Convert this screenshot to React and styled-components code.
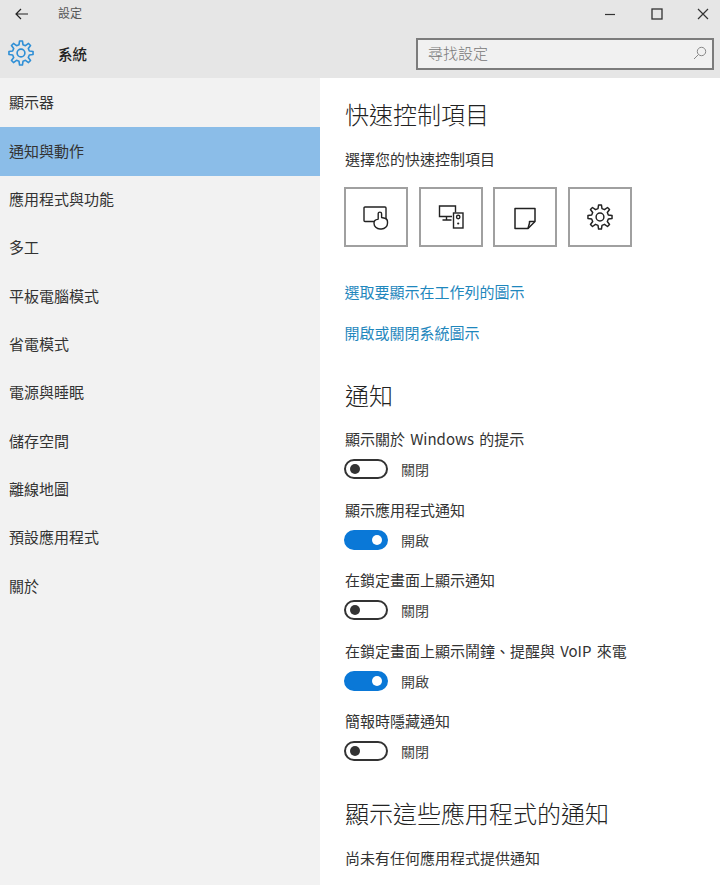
import styled, { createGlobalStyle } from "styled-components";

const Global = createGlobalStyle`
  html, body {
    margin: 0;
    padding: 0;
    background: #fff;
  }
  body {
    font-family: "Noto Sans CJK TC", "Noto Sans", sans-serif;
    font-weight: 300;
    color: #333;
  }
`;

const Page = styled.div`
  width: 720px;
  height: 885px;
  overflow: hidden;
  display: flex;
  flex-direction: column;
`;

const Header = styled.header`
  height: 78px;
  flex: none;
  background: #e6e6e6;
  display: flex;
  flex-direction: column;
`;

const TitleBar = styled.div`
  height: 28px;
  display: flex;
  align-items: center;
`;

const BackButton = styled.div`
  width: 58px;
  padding-left: 15px;
  box-sizing: border-box;
  display: flex;
  align-items: center;
`;

const WindowTitle = styled.div`
  font-size: 12px;
  line-height: 24px;
  padding-bottom: 2px;
  font-weight: 400;
  color: #555;
  flex: 1;
`;

const WindowControls = styled.div`
  display: flex;
  align-items: center;
  gap: 34.5px;
  padding-right: 11px;
`;

const SystemBar = styled.div`
  flex: 1;
  display: flex;
  align-items: center;
  padding: 0 6px 0 8px;
`;

const SystemName = styled.div`
  margin-left: 24px;
  font-size: 14.5px;
  font-weight: 500;
  color: #222;
  flex: 1;
`;

const Search = styled.div`
  width: 298px;
  height: 32px;
  box-sizing: border-box;
  border: 2px solid #7c7c7c;
  background: #f1f1f1;
  display: flex;
  align-items: center;
  justify-content: space-between;
  padding: 0 5px 3px 10px;
  margin-top: 2px;
  font-size: 15px;
  color: #777;
`;

const Body = styled.div`
  flex: 1;
  display: flex;
`;

const Sidebar = styled.nav`
  width: 320px;
  flex: none;
  background: #f2f2f2;
  padding-top: 1px;
`;

const NavItem = styled.div`
  height: 48.35px;
  box-sizing: border-box;
  display: flex;
  align-items: center;
  padding: 0 0 3px 9px;
  font-size: 15px;
  font-weight: 400;
  color: #333;
  background: ${(p) => (p.$active ? "#8bbde8" : "transparent")};
`;

const Content = styled.main`
  flex: 1;
  padding-left: 25px;
  display: flex;
  flex-direction: column;
`;

const Heading = styled.h2`
  margin: ${(p) => p.$top}px 0 0;
  font-size: 24px;
  line-height: 34px;
  font-weight: 300;
  color: #222;
`;

const Label = styled.div`
  margin-top: ${(p) => p.$top ?? 0}px;
  font-size: 15px;
  line-height: 22px;
  font-weight: 400;
  word-spacing: 1.8px;
  color: #333;
`;

const Tiles = styled.div`
  display: flex;
  gap: 10.5px;
  margin-top: 17px;
  margin-left: -1px;
`;

const Tile = styled.div`
  width: 64px;
  height: 60px;
  box-sizing: border-box;
  border: 2px solid #a0a0a0;
  display: flex;
  align-items: center;
  justify-content: center;
`;

const TextLink = styled.a`
  display: block;
  margin-top: ${(p) => p.$top}px;
  margin-left: -0.5px;
  font-size: 15px;
  line-height: 22px;
  font-weight: 400;
  color: #1f87bd;
`;

const SettingRow = styled.div`
  margin-top: ${(p) => p.$top}px;
  display: flex;
  flex-direction: column;
`;

const ToggleRow = styled.div`
  display: flex;
  align-items: center;
  gap: 13px;
  margin-top: 9px;
  margin-left: -1px;
  height: 20px;
`;

const Track = styled.div`
  width: 44px;
  height: 20px;
  box-sizing: border-box;
  border-radius: 10px;
  border: 2px solid ${(p) => (p.$on ? "#0a78d7" : "#333")};
  background: ${(p) => (p.$on ? "#0a78d7" : "transparent")};
  display: flex;
  align-items: center;
  justify-content: ${(p) => (p.$on ? "flex-end" : "flex-start")};
  padding: 0 4px;
`;

const Knob = styled.div`
  width: 10px;
  height: 10px;
  border-radius: 50%;
  background: ${(p) => (p.$on ? "#fff" : "#333")};
`;

const ToggleText = styled.span`
  font-size: 14px;
  font-weight: 400;
  color: #444;
`;

// eight toothed gear outline, used in the header and in the quick action tile
function gearPath(cx, cy, outer, inner) {
  const teeth = 8;
  const step = (Math.PI * 2) / teeth;
  const pts = [];
  for (let i = 0; i < teeth; i++) {
    const a = i * step - Math.PI / 2;
    const at = (r, d) => [cx + r * Math.cos(a + d), cy + r * Math.sin(a + d)];
    pts.push(at(inner, -step * 0.3), at(outer, -step * 0.15), at(outer, step * 0.15), at(inner, step * 0.3));
  }
  return "M" + pts.map((p) => p[0].toFixed(2) + " " + p[1].toFixed(2)).join("L") + "Z";
}

function Gear({ size, color, width }) {
  return (
    <svg width={size} height={size} viewBox="0 0 24 24" fill="none" stroke={color} strokeWidth={width} strokeLinejoin="round">
      <path d={gearPath(12, 12, 11.2, 7.9)} />
      <circle cx="12" cy="12" r="3.6" />
    </svg>
  );
}

function BackIcon() {
  return (
    <svg width="14" height="12" viewBox="0 0 14 12" fill="none" stroke="#222" strokeWidth="1.2">
      <path d="M13 6H1.2M6 1L1 6l5 5" />
    </svg>
  );
}

function MinIcon() {
  return (
    <svg width="12" height="12" viewBox="0 0 12 12" fill="none" stroke="#333" strokeWidth="1.2">
      <path d="M1 6.5h10" />
    </svg>
  );
}

function MaxIcon() {
  return (
    <svg width="12" height="12" viewBox="0 0 12 12" fill="none" stroke="#333" strokeWidth="1.3">
      <rect x="1" y="1" width="10" height="10" />
    </svg>
  );
}

function CloseIcon() {
  return (
    <svg width="12" height="12" viewBox="0 0 12 12" fill="none" stroke="#333" strokeWidth="1.2">
      <path d="M1 1l10 10M11 1L1 11" />
    </svg>
  );
}

function SearchIcon() {
  return (
    <svg width="14" height="14" viewBox="0 0 14 14" fill="none" stroke="#888" strokeWidth="1">
      <circle cx="8.5" cy="5.5" r="4.2" />
      <path d="M5.5 8.5L1 13" />
    </svg>
  );
}

function TabletIcon() {
  return (
    <svg width="26" height="26" viewBox="0 0 26 26" fill="none" stroke="#222" strokeWidth="1.4" strokeLinejoin="round">
      <rect x="1" y="3" width="22" height="14.5" rx="1" />
      <path d="M15.200 15V9.800a1.700 1.700 0 0 1 3.400 0V13.500l3.200.8c1.600.4 2.700 1.600 2.700 3.400v1.500c0 3.300-2.700 5.800-6 5.800h-1.500c-3.300 0-6-2.500-6-5.800 0-2.200 1.500-3.600 3.700-3.800z" fill="#fff" />
    </svg>
  );
}

function DevicesIcon() {
  return (
    <svg width="26" height="26" viewBox="0 0 26 26" fill="none" stroke="#222" strokeWidth="1.4">
      <path d="M14 12.500H1.500V2h16v6.500" />
      <path d="M8.500 12.500V16M4.500 16h9" />
      <rect x="15.500" y="9" width="9.500" height="15" />
      <circle cx="20.200" cy="13" r="1.700" />
      <circle cx="20.200" cy="19.500" r="1.100" fill="#222" stroke="none" />
    </svg>
  );
}

function NoteIcon() {
  return (
    <svg width="24" height="26" viewBox="0 0 24 26" fill="none" stroke="#222" strokeWidth="1.5" strokeLinejoin="round">
      <path d="M2 4.500h20v13l-7 7H2z" />
      <path d="M22 17.500h-5.500v1.500l-1.500 5.500" />
    </svg>
  );
}

const navItems = [
  "顯示器",
  "通知與動作",
  "應用程式與功能",
  "多工",
  "平板電腦模式",
  "省電模式",
  "電源與睡眠",
  "儲存空間",
  "離線地圖",
  "預設應用程式",
  "關於",
];

const settings = [
  { label: "顯示關於 Windows 的提示", on: false },
  { label: "顯示應用程式通知", on: true },
  { label: "在鎖定畫面上顯示通知", on: false },
  { label: "在鎖定畫面上顯示鬧鐘、提醒與 VoIP 來電", on: true },
  { label: "簡報時隱藏通知", on: false },
];

export default function App() {
  return (
    <Page>
      <Global />
      <Header>
        <TitleBar>
          <BackButton>
            <BackIcon />
          </BackButton>
          <WindowTitle>設定</WindowTitle>
          <WindowControls>
            <MinIcon />
            <MaxIcon />
            <CloseIcon />
          </WindowControls>
        </TitleBar>
        <SystemBar>
          <Gear size={26} color="#2f8fd6" width={1.5} />
          <SystemName>系統</SystemName>
          <Search>
            <span>尋找設定</span>
            <SearchIcon />
          </Search>
        </SystemBar>
      </Header>
      <Body>
        <Sidebar>
          {navItems.map((item, i) => (
            <NavItem key={item} $active={i === 1}>
              {item}
            </NavItem>
          ))}
        </Sidebar>
        <Content>
          <Heading $top={19}>快速控制項目</Heading>
          <Label $top={17}>選擇您的快速控制項目</Label>
          <Tiles>
            <Tile>
              <TabletIcon />
            </Tile>
            <Tile>
              <DevicesIcon />
            </Tile>
            <Tile>
              <NoteIcon />
            </Tile>
            <Tile>
              <Gear size={26} color="#222" width={1.35} />
            </Tile>
          </Tiles>
          <TextLink $top={34}>選取要顯示在工作列的圖示</TextLink>
          <TextLink $top={19}>開啟或關閉系統圖示</TextLink>
          <Heading $top={34}>通知</Heading>
          {settings.map((s, i) => (
            <SettingRow key={s.label} $top={i === 0 ? 16 : 19.5}>
              <Label>{s.label}</Label>
              <ToggleRow>
                <Track $on={s.on}>
                  <Knob $on={s.on} />
                </Track>
                <ToggleText>{s.on ? "開啟" : "關閉"}</ToggleText>
              </ToggleRow>
            </SettingRow>
          ))}
          <Heading $top={34.6}>顯示這些應用程式的通知</Heading>
          <Label $top={17}>尚未有任何應用程式提供通知</Label>
        </Content>
      </Body>
    </Page>
  );
}
